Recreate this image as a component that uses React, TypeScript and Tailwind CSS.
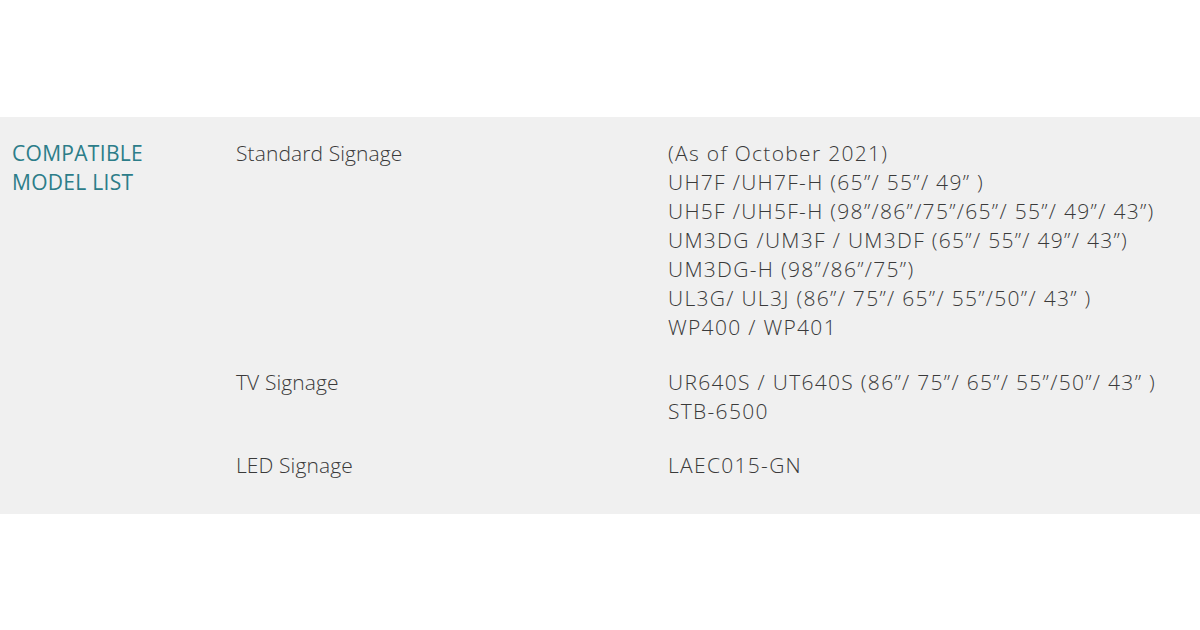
const ROWS: { label: string; models: string[]; gap: string }[] = [
  {
    label: 'Standard Signage',
    gap: 'mb-[26px]',
    models: [
      '(As of October 2021)',
      'UH7F /UH7F-H (65\u201d/ 55\u201d/ 49\u201d )',
      'UH5F /UH5F-H (98\u201d/86\u201d/75\u201d/65\u201d/ 55\u201d/ 49\u201d/ 43\u201d)',
      'UM3DG /UM3F / UM3DF (65\u201d/ 55\u201d/ 49\u201d/ 43\u201d)',
      'UM3DG-H (98\u201d/86\u201d/75\u201d)',
      'UL3G/ UL3J (86\u201d/ 75\u201d/ 65\u201d/ 55\u201d/50\u201d/ 43\u201d )',
      'WP400 / WP401',
    ],
  },
  {
    label: 'TV Signage',
    gap: 'mb-[25px]',
    models: ['UR640S / UT640S (86\u201d/ 75\u201d/ 65\u201d/ 55\u201d/50\u201d/ 43\u201d )', 'STB-6500'],
  },
  { label: 'LED Signage', gap: '', models: ['LAEC015-GN'] },
];

export default function App() {
  return (
    <div className="w-[1200px] h-[630px] bg-white font-['Open_Sans',sans-serif] font-light">
      <div className="h-[117px]" />
      {/* ── Spec row ─────────────────────────────────────────────── */}
      <div className="bg-[#f0f0f0] h-[397px] pt-[22px] pl-3 flex">
        <div className="w-[224px] text-[21px] leading-[29px] tracking-[0.3px] text-[#2c7d89] font-normal">
          COMPATIBLE
          <br />
          MODEL LIST
        </div>
        <div className="flex flex-col">
          {ROWS.map((row) => (
            <div key={row.label} className={`flex text-[21px] leading-[29px] text-[#3a3a3a] ${row.gap}`}>
              <div className="w-[432px] tracking-[0.1px]">{row.label}</div>
              <div className="tracking-[1.3px]">
                {row.models.map((m) => (
                  <div key={m}>{m}</div>
                ))}
              </div>
            </div>
          ))}
        </div>
      </div>
    </div>
  );
}
